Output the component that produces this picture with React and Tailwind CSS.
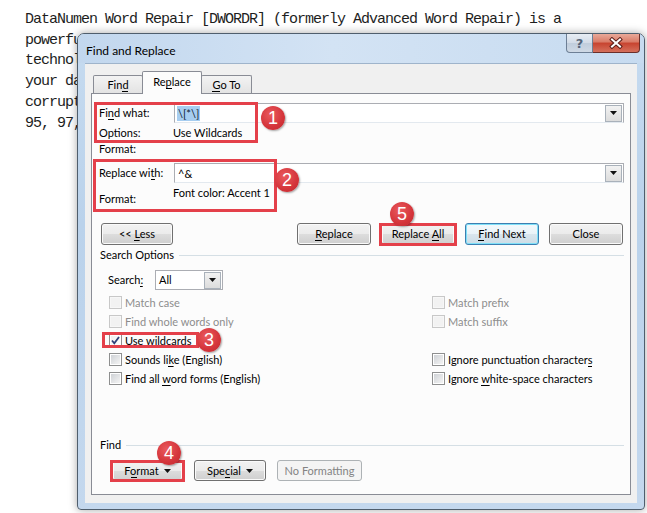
import React from "react";

let ctx = null;
function measure(str, size) {
  if (typeof document === "undefined") return str.length * size * 0.5;
  if (!ctx) ctx = document.createElement("canvas").getContext("2d");
  ctx.font = `${size}px Lato`;
  return ctx.measureText(str).width;
}

/* word with one underlined access-key letter; the underline is a background rule so the text stays whole */
function Acc({ text, i, size = 11 }) {
  const left = measure(text.slice(0, i), size);
  const width = measure(text[i], size);
  return (
    <span
      className="inline-block bg-no-repeat"
      style={{
        backgroundImage: "linear-gradient(currentColor, currentColor)",
        backgroundSize: `${width}px 1px`,
        backgroundPosition: `${left}px 14px`,
      }}
    >
      {text}
    </span>
  );
}

function Btn({ children, className = "", variant = "normal" }) {
  const styles =
    variant === "disabled"
      ? "border-[#adb2b5] bg-[#f4f4f4] text-[#838383]"
      : variant === "default"
      ? "border-[#3c7fb1] bg-[linear-gradient(#f3f9fc,#e9f3f8_50%,#d9e6ee_50%,#cddde6)] shadow-[inset_0_0_0_1px_#7fe0f8] text-black"
      : "border-[#707070] bg-[linear-gradient(#f2f2f2,#ebebeb_50%,#dddddd_50%,#cfcfcf)] shadow-[inset_0_0_0_1px_#fafafa] text-black";
  return (
    <div className={`flex items-center justify-center rounded-[3px] border leading-[16px] ${styles} ${className}`}>
      {children}
    </div>
  );
}

function Caret() {
  return (
    <svg width="7" height="4" viewBox="0 0 7 4" className="ml-[5px] mt-[1px]">
      <path d="M0 0 H7 L3.5 4 Z" fill="#111" />
    </svg>
  );
}

function DropArrow({ className = "" }) {
  return (
    <div className={`flex items-center justify-center border border-[#a9b1ba] bg-[linear-gradient(#f2f2f2,#dcdcdc)] ${className}`}>
      <svg width="7" height="4" viewBox="0 0 7 4">
        <path d="M0 0 H7 L3.5 4 Z" fill="#111" />
      </svg>
    </div>
  );
}

function Cb({ checked = false, disabled = false }) {
  return (
    <span
      className={`relative w-[13px] h-[13px] shrink-0 border flex items-center justify-center ${
        disabled ? "border-[#c8c8c8] bg-[#f7f7f7]" : "border-[#8e8f8f] bg-white"
      }`}
    >
      <span
        className={`w-[9px] h-[9px] ${
          disabled
            ? "bg-[#f2f2f2]"
            : checked
            ? "bg-[linear-gradient(135deg,#f0f0f0,#fdfdfd)]"
            : "bg-[linear-gradient(135deg,#cfd2d6,#f4f4f4)]"
        }`}
      />
      {checked && (
        <svg width="11" height="11" viewBox="0 0 11 11" className="absolute left-[0px] top-[0px]">
          <path d="M2 5.5 L4.3 8.3 L9 2" stroke="#2f3f78" strokeWidth="1.8" fill="none" />
        </svg>
      )}
    </span>
  );
}

function CbRow({ label, checked, disabled }) {
  return (
    <div className={`h-[19px] flex items-center gap-[3px] leading-[16px] ${disabled ? "text-[#8d8d8d]" : "text-black"}`}>
      <Cb checked={checked} disabled={disabled} />
      {label}
    </div>
  );
}

function Circle({ n, className }) {
  return (
    <div
      className={`absolute w-[24px] h-[24px] rounded-full bg-[radial-gradient(circle_at_40%_35%,#ea5a5e,#d4343a_60%,#bd2a30)] shadow-[1px_1px_2px_rgba(0,0,0,0.35)] flex items-center justify-center text-white text-[18px] leading-none font-['Liberation_Sans',sans-serif] ${className}`}
    >
      {n}
    </div>
  );
}

export default function App() {
  return (
    <div className="relative w-[647px] h-[513px] bg-white overflow-hidden">
      {/* document text behind the dialog (only the parts left of the dialog are visible) */}
      <div className="pt-[10px] pl-[25px] font-['Liberation_Mono',monospace] text-[15px] tracking-[-1px] leading-[20.7px] text-[#1e1e1e] whitespace-pre">
        <div>DataNumen Word Repair [DWORDR] (formerly Advanced Word Repair) is a</div>
        <div>powerfu</div>
        <div>technol</div>
        <div>your da</div>
        <div>corrupt</div>
        <div>95, 97,</div>
      </div>

      {/* dialog window */}
      <div className="absolute left-[77px] top-[33px] w-[568px] h-[477px] flex flex-col rounded-t-[7px] rounded-b-[4px] border border-[#4f5e6d] bg-[linear-gradient(#c6dbf0,#bad2eb_40%,#c4d8ee)] shadow-[0_0_9px_rgba(0,0,0,0.35)] font-['Lato',sans-serif] text-[11px] text-black">
        {/* title bar */}
        <div className="h-[29px] flex justify-between items-start rounded-t-[6px] bg-[linear-gradient(90deg,#c2d7ee,#d3e3f4_45%,#c7dbf0)]">
          <div className="pl-[8px] pt-[9px] leading-[16px] text-[12px]">Find and Replace</div>
          <div className="flex mr-[4px]">
            <div className="w-[27px] h-[19px] rounded-bl-[4px] border border-t-0 border-[#6d7f95] bg-[linear-gradient(#e7edf4,#d2dbe7_50%,#c0cddc_50%,#cfd9e5)] flex items-center justify-center text-[13px] leading-none font-bold text-[#55657a] font-['DejaVu_Sans',sans-serif]">
              ?
            </div>
            <div className="w-[47px] h-[19px] rounded-br-[4px] border border-l-0 border-t-0 border-[#6b2f2a] bg-[linear-gradient(#e9a999,#d97a66_45%,#c7432f_50%,#d5705c)] flex items-center justify-center">
              <svg width="16" height="12" viewBox="0 0 16 12">
                <path d="M4 2.5 L12 9.5 M12 2.5 L4 9.5" stroke="#5b1d18" strokeWidth="4" strokeLinecap="square" />
                <path d="M4 2.5 L12 9.5 M12 2.5 L4 9.5" stroke="#ffffff" strokeWidth="2" strokeLinecap="square" />
              </svg>
            </div>
          </div>
        </div>

        {/* client area */}
        <div className="mx-[7px] mb-[6px] h-[440px] bg-[#f0f0f0] border-t border-[#9fb4cb] pt-[7px] px-[6px] pb-[8px] flex flex-col">
          {/* tabs */}
          <div className="h-[22px] flex items-end pl-[2px] relative z-10">
            <div className="w-[50px] h-[18px] border border-b-0 border-[#898c95] rounded-t-[2px] bg-[linear-gradient(#f3f3f3,#e3e3e3)] flex items-center justify-center leading-[16px]">
              <Acc text="Find" i={3} />
            </div>
            <div className="-ml-[1px] w-[60px] h-[23px] -mb-[1px] border border-b-0 border-[#898c95] rounded-t-[2px] bg-[#fcfcfc] flex items-center justify-center leading-[16px] pb-[2px]">
              <Acc text="Replace" i={2} />
            </div>
            <div className="-ml-[1px] w-[51px] h-[18px] border border-b-0 border-[#898c95] rounded-t-[2px] bg-[linear-gradient(#f3f3f3,#e3e3e3)] flex items-center justify-center leading-[16px]">
              <Acc text="Go To" i={0} />
            </div>
          </div>

          {/* panel */}
          <div className="flex-1 border border-[#898c95] bg-[#fcfcfc] pt-[9px] pl-[7px] pr-[6px] flex flex-col">
            {/* find what */}
            <div className="h-[20px] flex items-center">
              <div className="w-[75px] leading-[16px]">
                <Acc text="Find what:" i={2} />
              </div>
              <div className="flex-1 h-[20px] border border-[#abadb3] border-b-[#e3e9ef] flex items-center justify-between pl-[2px] pr-[1px] bg-white">
                <span className="bg-[#a6cdf0] text-[#0b1a33] leading-[15px] px-[1px]">\[*\]</span>
                <DropArrow className="w-[17px] h-[17px]" />
              </div>
            </div>
            <div className="mt-[2px] h-[16px] flex leading-[16px]">
              <div className="w-[74px]">Options:</div>
              <div>Use Wildcards</div>
            </div>
            <div className="h-[16px] leading-[16px]">Format:</div>

            {/* replace with */}
            <div className="mt-[6px] h-[20px] flex items-center">
              <div className="w-[75px] leading-[16px]">
                <Acc text="Replace with:" i={10} />
              </div>
              <div className="flex-1 h-[20px] border border-[#abadb3] border-b-[#e3e9ef] flex items-center justify-between pl-[3px] pr-[1px] bg-white">
                <span className="leading-[15px]">^&amp;</span>
                <DropArrow className="w-[17px] h-[17px]" />
              </div>
            </div>
            <div className="mt-[2px] h-[22px] flex leading-[16px]">
              <div className="w-[74px] self-end">Format:</div>
              <div className="self-start">Font color: Accent 1</div>
            </div>

            {/* buttons */}
            <div className="mt-[16px] h-[22px] flex justify-between pr-[1px]">
              <Btn className="ml-[2px] w-[72px] h-[22px]">
                <Acc text="<< Less" i={3} />
              </Btn>
              <div className="flex gap-[10px]">
                <Btn className="w-[74px] h-[22px]">
                  <Acc text="Replace" i={0} />
                </Btn>
                <Btn className="w-[74px] h-[22px]">
                  <Acc text="Replace All" i={8} />
                </Btn>
                <Btn className="w-[74px] h-[22px]" variant="default">
                  <Acc text="Find Next" i={0} />
                </Btn>
                <Btn className="w-[74px] h-[22px]">Close</Btn>
              </div>
            </div>

            {/* search options */}
            <div className="mt-[2px] h-[16px] flex items-center gap-[5px] pl-[1px]">
              <span className="leading-[16px]">Search Options</span>
              <div className="flex-1 h-px bg-[#d5dfe5]" />
            </div>
            <div className="mt-[7px] h-[20px] flex items-center pl-[9px]">
              <div className="w-[47px] leading-[16px]">
                <Acc text="Search:" i={6} />
              </div>
              <div className="w-[68px] h-[20px] border border-[#abadb3] bg-white flex items-center justify-between pl-[3px] pr-[1px]">
                <span className="leading-[16px]">All</span>
                <DropArrow className="w-[17px] h-[17px]" />
              </div>
            </div>

            {/* checkboxes */}
            <div className="mt-[3px] flex pl-[10px]">
              <div className="w-[323px] flex flex-col">
                <CbRow label="Match case" disabled />
                <CbRow label="Find whole words only" disabled />
                <CbRow label="Use wildcards" checked />
                <CbRow label={<Acc text="Sounds like (English)" i={9} />} />
                <CbRow label={<Acc text="Find all word forms (English)" i={9} />} />
              </div>
              <div className="flex flex-col">
                <CbRow label="Match prefix" disabled />
                <CbRow label="Match suffix" disabled />
                <div className="h-[19px]" />
                <CbRow label={<Acc text="Ignore punctuation characters" i={28} />} />
                <CbRow label={<Acc text="Ignore white-space characters" i={7} />} />
              </div>
            </div>

            {/* find section */}
            <div className="mt-[49px] h-[16px] flex items-center gap-[5px] pl-[1px]">
              <span className="leading-[16px]">Find</span>
              <div className="flex-1 h-px bg-[#d5dfe5]" />
            </div>
            <div className="mt-[7px] h-[21px] flex gap-[11px] pl-[13px]">
              <Btn className="w-[71px] h-[21px]">
                <Acc text="Format" i={1} />
                <Caret />
              </Btn>
              <Btn className="w-[72px] h-[21px]">
                <Acc text="Special" i={3} />
                <Caret />
              </Btn>
              <Btn className="w-[85px] h-[21px]" variant="disabled">
                No Formatting
              </Btn>
            </div>
          </div>
        </div>
      </div>

      {/* annotations */}
      <div className="absolute left-[94px] top-[102px] w-[164px] h-[41px] border-[3px] border-[#e4404a]" />
      <div className="absolute left-[93px] top-[159px] w-[184px] h-[53px] border-[3px] border-[#e4404a]" />
      <div className="absolute left-[379px] top-[223px] w-[78px] h-[23px] border-[3px] border-[#e4404a]" />
      <div className="absolute left-[102px] top-[332px] w-[97px] h-[16px] border-[3px] border-[#e4404a]" />
      <div className="absolute left-[110px] top-[460px] w-[75px] h-[22px] border-[3px] border-[#e4404a]" />

      <Circle n="1" className="left-[261px] top-[106px]" />
      <Circle n="2" className="left-[275px] top-[168px]" />
      <Circle n="5" className="left-[390px] top-[202px]" />
      <Circle n="3" className="left-[197px] top-[328px]" />
      <Circle n="4" className="left-[157px] top-[441px]" />
    </div>
  );
}
